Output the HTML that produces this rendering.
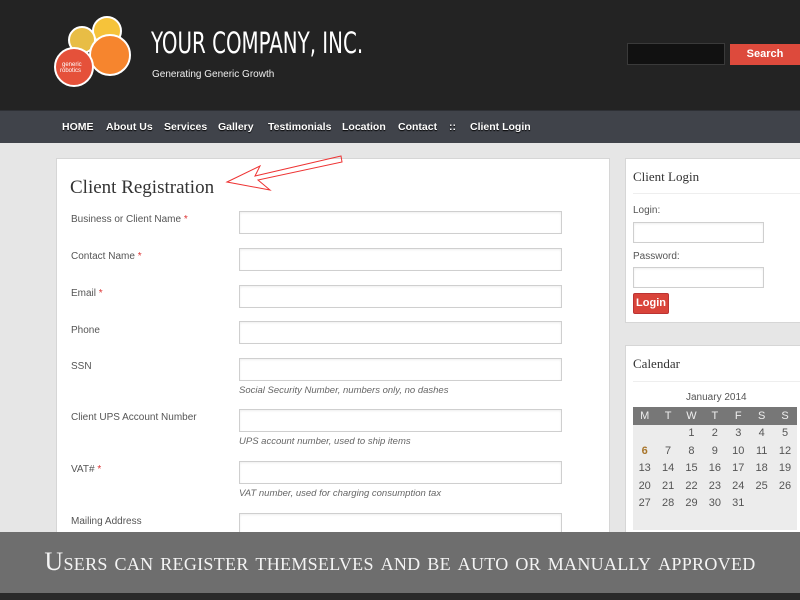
<!DOCTYPE html>
<html><head><meta charset="utf-8"><style>
*{margin:0;padding:0;box-sizing:border-box}
body{width:800px;height:600px;overflow:hidden;background:#e6e6e6;font-family:"Liberation Sans",sans-serif;position:relative}
.a{position:absolute}
.hdr{left:0;top:0;width:800px;height:110px;background:#232323}
.nav{left:0;top:110px;width:800px;height:33px;background:#40434a;border-top:1px solid #2e3035}
.nav span{position:absolute;top:10px;color:#fff;font-weight:bold;font-size:10.5px;text-shadow:0 1px 1px #000}
.panel{background:#fff;border:1px solid #d6d6d6}
.lbl{font-size:10px;color:#555;left:71px}
.lbl b{color:#d33;font-weight:normal}
.inp{left:239px;width:323px;height:23px;border:1px solid #cfcfcf;background:#fff;box-shadow:inset 0 1px 2px #eee}
.hint{left:239px;font-size:9.5px;font-style:italic;color:#666}
.h{font-family:"Liberation Serif",serif;color:#333}
.cal td{width:23.4px;text-align:center;font-size:11px;color:#555;height:17.5px}
</style></head><body>
<div class="a hdr"></div>
<svg class="a" style="left:50px;top:10px" width="85" height="80">
<circle cx="57" cy="21" r="14" fill="#f6c33a" stroke="#fff" stroke-width="2"/>
<circle cx="32" cy="30" r="13" fill="#e8bd45" stroke="#fff" stroke-width="2"/>
<circle cx="60" cy="45" r="20" fill="#f6852e" stroke="#fff" stroke-width="2"/>
<circle cx="24" cy="57" r="19" fill="#e5513a" stroke="#fff" stroke-width="2"/>
<text x="12" y="56" font-size="6" fill="#fff" font-family="Liberation Sans">generic</text>
<text x="10" y="62" font-size="6" fill="#fff" font-family="Liberation Sans">robotics</text>
</svg>
<div class="a" style="left:151px;top:26px;color:#fff;font-size:29px;font-family:'DejaVu Sans Condensed','Liberation Sans Narrow',sans-serif;transform:scaleX(0.76);transform-origin:left top;white-space:nowrap">YOUR COMPANY, INC.</div>
<div class="a" style="left:152px;top:69px;color:#eee;font-size:10px">Generating Generic Growth</div>
<div class="a" style="left:627px;top:43px;width:98px;height:22px;background:#111;border:1px solid #3a3a3a"></div>
<div class="a" style="left:730px;top:44px;width:70px;height:21px;background:#dd4a3c;color:#fff;font-size:11px;font-weight:bold;text-align:center;line-height:21px">Search</div>
<div class="a nav">
<span style="left:62px">HOME</span><span style="left:106px">About Us</span><span style="left:164px">Services</span><span style="left:218px">Gallery</span><span style="left:268px">Testimonials</span><span style="left:342px">Location</span><span style="left:398px">Contact</span><span style="left:449px">::</span><span style="left:470px">Client Login</span>
</div>
<div class="a panel" style="left:56px;top:158px;width:554px;height:380px"></div>
<div class="a h" style="left:70px;top:177px;font-size:19px">Client Registration</div>
<svg class="a" style="left:222px;top:152px" width="125" height="45"><path d="M5 30 L38 14 L33 24 L119 4 L120 10 L36 28 L48 38 Z" fill="none" stroke="#e33" stroke-width="1"/></svg>
<div class="a lbl" style="top:214px">Business or Client Name <b>*</b></div><div class="a inp" style="top:211px"></div>
<div class="a lbl" style="top:251px">Contact Name <b>*</b></div><div class="a inp" style="top:248px"></div>
<div class="a lbl" style="top:288px">Email <b>*</b></div><div class="a inp" style="top:285px"></div>
<div class="a lbl" style="top:325px">Phone</div><div class="a inp" style="top:321px"></div>
<div class="a lbl" style="top:361px">SSN</div><div class="a inp" style="top:358px"></div>
<div class="a hint" style="top:385px">Social Security Number, numbers only, no dashes</div>
<div class="a lbl" style="top:412px">Client UPS Account Number</div><div class="a inp" style="top:409px"></div>
<div class="a hint" style="top:436px">UPS account number, used to ship items</div>
<div class="a lbl" style="top:464px">VAT# <b>*</b></div><div class="a inp" style="top:461px"></div>
<div class="a hint" style="top:488px">VAT number, used for charging consumption tax</div>
<div class="a lbl" style="top:516px">Mailing Address</div><div class="a inp" style="top:513px"></div>

<div class="a panel" style="left:625px;top:158px;width:180px;height:165px"></div>
<div class="a h" style="left:633px;top:169px;font-size:13px">Client Login</div>
<div class="a" style="left:633px;top:193px;width:167px;border-top:1px solid #eee"></div>
<div class="a lbl" style="left:633px;top:205px;font-size:10px">Login:</div>
<div class="a inp" style="left:633px;top:222px;width:131px;height:21px"></div>
<div class="a lbl" style="left:633px;top:251px;font-size:10px">Password:</div>
<div class="a inp" style="left:633px;top:267px;width:131px;height:21px"></div>
<div class="a" style="left:633px;top:293px;width:36px;height:21px;background:#d9443a;border:1px solid #b33;color:#fff;font-size:11px;font-weight:bold;text-align:center;line-height:19px;border-radius:2px">Login</div>

<div class="a panel" style="left:625px;top:345px;width:180px;height:200px"></div>
<div class="a h" style="left:633px;top:356px;font-size:13px">Calendar</div>
<div class="a" style="left:633px;top:381px;width:167px;border-top:1px solid #eee"></div>
<div class="a" style="left:686px;top:392px;font-size:10px;color:#555">January 2014</div>
<div class="a" style="left:633px;top:407px;width:164px;height:123px;background:#ececec"></div>
<table class="a cal" style="left:633px;top:407px;border-collapse:collapse">
<tr style="background:#777"><td style="color:#eee">M</td><td style="color:#eee">T</td><td style="color:#eee">W</td><td style="color:#eee">T</td><td style="color:#eee">F</td><td style="color:#eee">S</td><td style="color:#eee">S</td></tr>
<tr><td></td><td></td><td>1</td><td>2</td><td>3</td><td>4</td><td>5</td></tr>
<tr><td style="color:#a8752a;font-weight:bold">6</td><td>7</td><td>8</td><td>9</td><td>10</td><td>11</td><td>12</td></tr>
<tr><td>13</td><td>14</td><td>15</td><td>16</td><td>17</td><td>18</td><td>19</td></tr>
<tr><td>20</td><td>21</td><td>22</td><td>23</td><td>24</td><td>25</td><td>26</td></tr>
<tr><td>27</td><td>28</td><td>29</td><td>30</td><td>31</td><td></td><td></td></tr>
</table>

<div class="a" style="left:0;top:532px;width:800px;height:61px;background:#6e6e6e"></div>
<div class="a" style="left:0;top:547px;width:800px;text-align:center;color:#f4f4f4;font-family:'Liberation Serif',serif;font-size:26px;font-variant:small-caps;letter-spacing:0.3px;white-space:nowrap">Users can register themselves and be auto or manually approved</div>
<div class="a" style="left:0;top:593px;width:800px;height:7px;background:#2a2a2a"></div>
</body></html>
